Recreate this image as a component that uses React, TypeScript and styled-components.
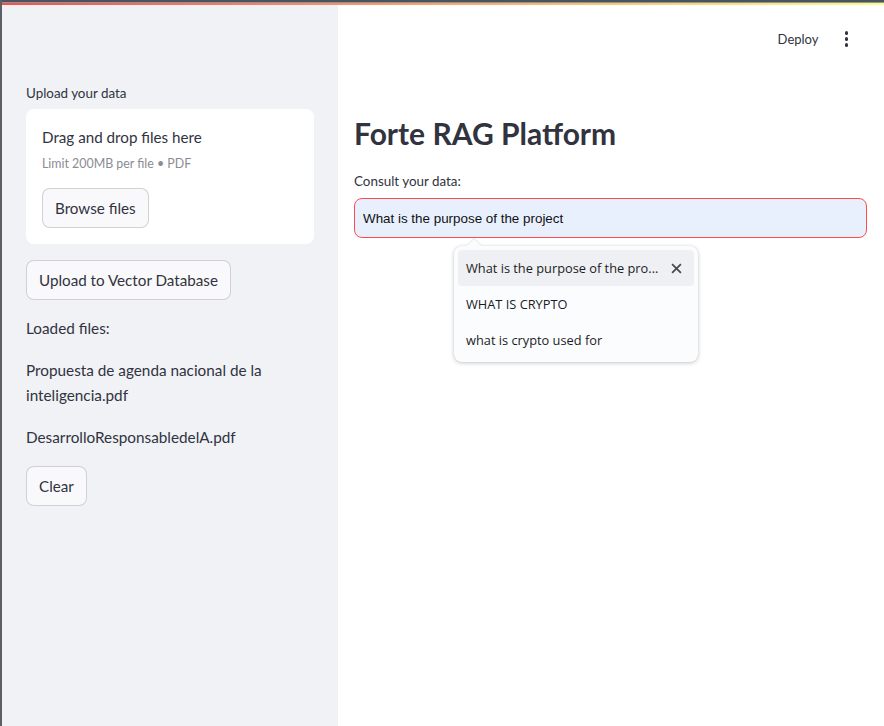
import React from "react";
import styled, { createGlobalStyle } from "styled-components";

const GlobalStyle = createGlobalStyle`
  html, body { margin: 0; padding: 0; background: #ffffff; }
  body { font-family: "Lato", "Noto Sans", sans-serif; color: #31333f; overflow: hidden; }
  * { box-sizing: border-box; }
`;

const Frame = styled.div`
  width: 884px;
  height: 726px;
  display: flex;
  flex-direction: column;
  border-left: 2px solid #5b5f66;
  overflow: hidden;
`;

const TopChrome = styled.div`
  height: 3px;
  background: #475560;
  border-bottom: 1px solid #8b949c;
  flex: none;
`;

const Decoration = styled.div`
  height: 2px;
  background: linear-gradient(90deg, #ff4b4b, #fffd80);
  flex: none;
`;

const Body = styled.div`
  flex: 1;
  display: flex;
  min-height: 0;
`;

const Sidebar = styled.aside`
  width: 336px;
  flex: none;
  background: #f0f2f6;
  padding: 76px 24px 0 24px;
  display: flex;
  flex-direction: column;
  gap: 16px;
`;

const Field = styled.div`
  display: flex;
  flex-direction: column;
`;

const Label = styled.label<{ $gap?: number }>`
  font-size: 13.4px;
  line-height: 24px;
  min-height: 24px;
  margin-bottom: ${(p) => p.$gap ?? 4}px;
  color: #31333f;
`;

const Dropzone = styled.section`
  background: #ffffff;
  border-radius: 8px;
  padding: 16px;
  display: flex;
  flex-direction: column;
  align-items: flex-start;
`;

const DropTitle = styled.span`
  font-size: 15.2px;
  line-height: 25.6px;
`;

const DropHint = styled.small`
  font-size: 12.4px;
  line-height: 22.4px;
  padding-top: 2px;
  color: #8a8c93;
`;

const Button = styled.button<{ $spaced?: boolean }>`
  font-family: inherit;
  font-size: 15.2px;
  color: #31333f;
  background: #f9f9fb;
  border: 1px solid rgba(49, 51, 63, 0.2);
  border-radius: 8px;
  height: 40px;
  padding: 0 12px;
  margin-top: ${(p) => (p.$spaced ? "13px" : "0")};
  align-self: flex-start;
  cursor: pointer;
`;

const Text = styled.p`
  margin: 0;
  font-size: 15.3px;
  line-height: 25.6px;
`;

const Main = styled.main`
  flex: 1;
  display: flex;
  flex-direction: column;
  min-width: 0;
`;

const Header = styled.header`
  height: 68px;
  display: flex;
  align-items: center;
  justify-content: flex-end;
  padding-right: 36px;
  gap: 26px;
`;

const Deploy = styled.span`
  font-size: 13px;
  color: #31333f;
`;

const Kebab = styled.span`
  display: flex;
  flex-direction: column;
  gap: 2.5px;
  span {
    width: 3.5px;
    height: 3.5px;
    border-radius: 50%;
    background: #31333f;
  }
`;

const Content = styled.div`
  padding: 41px 17px 0 16px;
  display: flex;
  flex-direction: column;
`;

const Title = styled.h1`
  margin: 0 0 17px 0;
  font-size: 30px;
  line-height: 38.4px;
  font-weight: 700;
  color: #31333f;
`;

const InputWrap = styled.div`
  position: relative;
`;

const Input = styled.div`
  height: 40px;
  border: 1px solid #ff4b4b;
  border-radius: 8px;
  background: #e8f0fe;
  display: flex;
  align-items: center;
  padding-left: 8px;
  font-family: "Liberation Sans", Arial, sans-serif;
  font-size: 13.4px;
  color: #111111;
`;

const Popup = styled.div`
  position: absolute;
  left: 100px;
  top: calc(100% + 8px);
  width: 244px;
  padding: 4px;
  background: #fbfcfe;
  border-radius: 8px;
  box-shadow: 0 1px 4px rgba(0, 0, 0, 0.22), 0 0 1px rgba(0, 0, 0, 0.12);
  font-family: "Open Sans", "Noto Sans", sans-serif;
  font-size: 12.8px;
  font-weight: 500;
  color: #1c1c1e;
  &::before {
    content: "";
    position: absolute;
    top: -5px;
    left: 15px;
    width: 10px;
    height: 10px;
    background: #fbfcfe;
    transform: rotate(45deg);
    box-shadow: -1px -1px 1px rgba(0, 0, 0, 0.08);
  }
`;

const Option = styled.div<{ $active?: boolean }>`
  position: relative;
  height: 36px;
  display: flex;
  align-items: center;
  justify-content: space-between;
  padding: 0 12px 0 8px;
  border-radius: 4px;
  background: ${(p) => (p.$active ? "#eef0f3" : "transparent")};
`;

const Close = styled.span`
  display: flex;
`;

export default function App() {
  return (
    <>
      <GlobalStyle />
      <Frame>
        <TopChrome />
        <Decoration />
        <Body>
          <Sidebar>
            <Field>
              <Label>Upload your data</Label>
              <Dropzone>
                <DropTitle>Drag and drop files here</DropTitle>
                <DropHint>Limit 200MB per file • PDF</DropHint>
                <Button $spaced>Browse files</Button>
              </Dropzone>
            </Field>
            <Button>Upload to Vector Database</Button>
            <Text>Loaded files:</Text>
            <Text>Propuesta de agenda nacional de la inteligencia.pdf</Text>
            <Text>DesarrolloResponsabledelA.pdf</Text>
            <Button>Clear</Button>
          </Sidebar>
          <Main>
            <Header>
              <Deploy>Deploy</Deploy>
              <Kebab>
                <span />
                <span />
                <span />
              </Kebab>
            </Header>
            <Content>
              <Title>Forte RAG Platform</Title>
              <Field>
                <Label $gap={5}>Consult your data:</Label>
                <InputWrap>
                  <Input>What is the purpose of the project</Input>
                  <Popup>
                    <Option $active>
                      <span>What is the purpose of the pro...</span>
                      <Close>
                        <svg width="11" height="11" viewBox="0 0 10 10">
                          <path d="M1 1L9 9M9 1L1 9" stroke="#4a4a4a" strokeWidth="1.6" />
                        </svg>
                      </Close>
                    </Option>
                    <Option>WHAT IS CRYPTO</Option>
                    <Option>what is crypto used for</Option>
                  </Popup>
                </InputWrap>
              </Field>
            </Content>
          </Main>
        </Body>
      </Frame>
    </>
  );
}
